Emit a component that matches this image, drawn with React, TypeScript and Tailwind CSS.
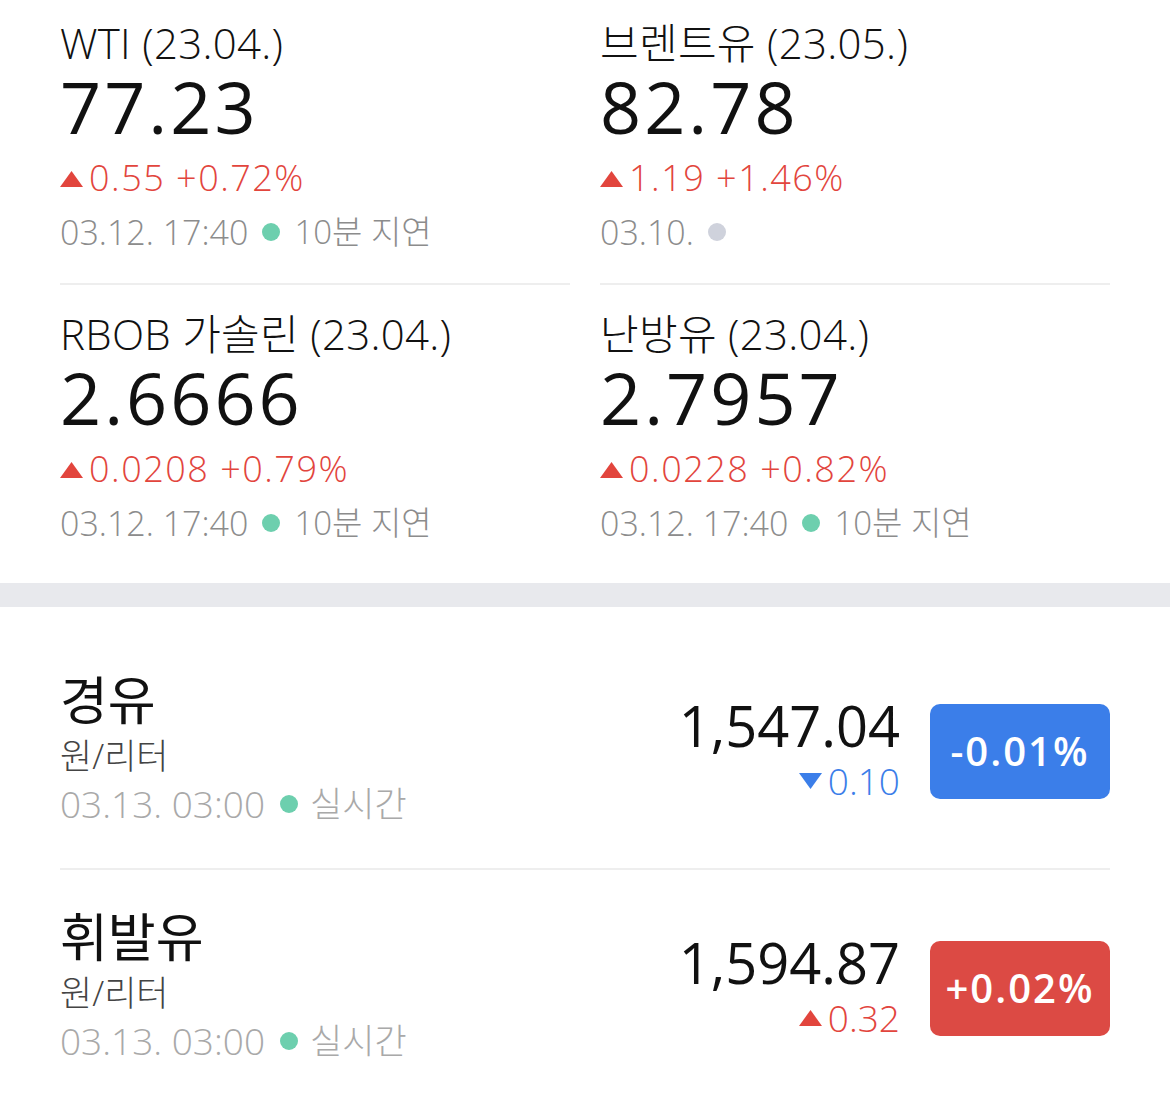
import React from "react";

const FONT = { fontFamily: "'Open Sans','Noto Sans CJK KR',sans-serif" };

function Up({ className = "" }: { className?: string }) {
  return (
    <svg width="23" height="16" viewBox="0 0 23 16" className={className}>
      <polygon points="11.5,0 23,16 0,16" fill="#e2453d" />
    </svg>
  );
}
function Down({ className = "" }: { className?: string }) {
  return (
    <svg width="23" height="16" viewBox="0 0 23 16" className={className}>
      <polygon points="0,0 23,0 11.5,16" fill="#3b7ee9" />
    </svg>
  );
}

type Cell = {
  title: string;
  price: string;
  change: string;
  date: string;
  delay?: string;
  gray?: boolean;
};

function FutureCell({ c, row }: { c: Cell; row: number }) {
  return (
    <div
      className={
        row === 0
          ? "pt-[18px] pb-[33px] border-b-2 border-[#eeeeee]"
          : "pt-[24px] pb-[42px]"
      }
    >
      <div className="text-[42px] leading-[50px] tracking-[0.3px] text-[#111] font-light whitespace-nowrap">{c.title}</div>
      <div className="mt-[3px] text-[72px] leading-[70px] font-medium tracking-[3px] text-[#111]">
        {c.price}
      </div>
      <div className="mt-[19px] flex items-center h-[36px] text-[36px] leading-[36px] tracking-[1.5px] text-[#e2453d] font-light whitespace-nowrap">
        <Up className="mr-[6px] mt-[2px]" />
        <span>{c.change}</span>
      </div>
      <div className="mt-[18px] flex items-center h-[36px] text-[34px] leading-[36px] text-[#8c8c8c] font-light whitespace-nowrap">
        <span>{c.date}</span>
        <span
          className={
            "ml-[14px] inline-block w-[18px] h-[18px] rounded-full " +
            (c.gray ? "bg-[#cfd2dc]" : "bg-[#6dcfae]")
          }
        />
        {c.delay && <span className="ml-[14px] text-[33px]">{c.delay}</span>}
      </div>
    </div>
  );
}

function DomesticRow({
  name,
  price,
  diff,
  pct,
  up,
  border,
}: {
  name: string;
  price: string;
  diff: string;
  pct: string;
  up: boolean;
  border: boolean;
}) {
  return (
    <div
      className={
        "flex items-center justify-between pt-[38px] pb-[37px] " +
        (border ? "border-b-2 border-[#eeeeee]" : "")
      }
    >
      <div className="flex flex-col pb-[7px]">
        <div className="text-[52px] leading-[58px] text-[#111]">{name}</div>
        <div className="mt-[7px] text-[35px] leading-[40px] text-[#444] font-light">원/리터</div>
        <div className="mt-[8px] flex items-center text-[37px] leading-[40px] text-[#a9a9a9] font-light whitespace-nowrap">
          <span>03.13. 03:00</span>
          <span className="ml-[15px] inline-block w-[18px] h-[18px] rounded-full bg-[#6dcfae]" />
          <span className="ml-[12px] text-[35px]">실시간</span>
        </div>
      </div>
      <div className="flex items-center">
        <div className="flex flex-col items-end pb-[7px]">
          <div className="text-[56px] leading-[60px] text-[#111] font-normal">{price}</div>
          <div
            className={
              "mt-[6px] flex items-center text-[37px] leading-[40px] font-light " +
              (up ? "text-[#e2453d]" : "text-[#3b7ee9]")
            }
          >
            {up ? <Up className="mr-[6px]" /> : <Down className="mr-[6px]" />}
            <span>{diff}</span>
          </div>
        </div>
        <div
          className={
            "ml-[30px] w-[180px] h-[95px] rounded-[10px] flex items-center justify-center text-white text-[40px] font-semibold tracking-[2px] " +
            (up ? "bg-[#dc4a44]" : "bg-[#3b7ee9]")
          }
        >
          {pct}
        </div>
      </div>
    </div>
  );
}

export default function App() {
  const cells: Cell[] = [
    { title: "WTI (23.04.)", price: "77.23", change: "0.55 +0.72%", date: "03.12. 17:40", delay: "10분 지연" },
    { title: "브렌트유 (23.05.)", price: "82.78", change: "1.19 +1.46%", date: "03.10.", gray: true },
    { title: "RBOB 가솔린 (23.04.)", price: "2.6666", change: "0.0208 +0.79%", date: "03.12. 17:40", delay: "10분 지연" },
    { title: "난방유 (23.04.)", price: "2.7957", change: "0.0228 +0.82%", date: "03.12. 17:40", delay: "10분 지연" },
  ];
  return (
    <div className="w-[1170px] h-[1101px] bg-white overflow-hidden" style={FONT}>
      <div className="grid grid-cols-2 gap-x-[30px] px-[60px]">
        {cells.map((c, i) => (
          <FutureCell key={i} c={c} row={i < 2 ? 0 : 1} />
        ))}
      </div>
      <div className="h-[24px] bg-[#e8e9ed]" />
      <div className="px-[60px] pt-[26px]">
        <DomesticRow name="경유" price="1,547.04" diff="0.10" pct="-0.01%" up={false} border />
        <DomesticRow name="휘발유" price="1,594.87" diff="0.32" pct="+0.02%" up border={false} />
      </div>
    </div>
  );
}
